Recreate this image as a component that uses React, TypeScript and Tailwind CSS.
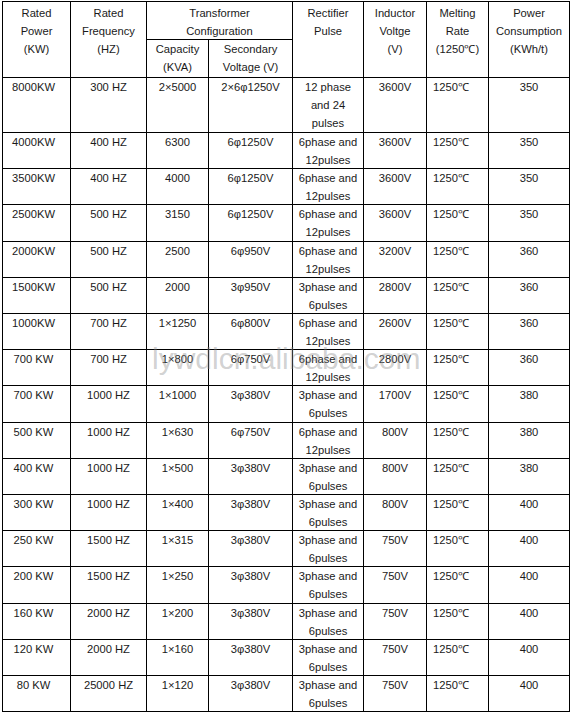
import React from 'react'

type Row = {
  power: string
  freq: string
  capacity: string
  voltage: string
  pulse: string[]
  inductor: string
  melting: string
  consumption: string
  h: string
}

const SIX = ['6phase and', '12pulses']
const THREE = ['3phase and', '6pulses']

const ROWS: Row[] = [
  { power: '8000KW', freq: '300 HZ', capacity: '2×5000', voltage: '2×6φ1250V', pulse: ['12 phase', 'and 24', 'pulses'], inductor: '3600V', melting: '1250℃', consumption: '350', h: 'h-[54px]' },
  { power: '4000KW', freq: '400 HZ', capacity: '6300', voltage: '6φ1250V', pulse: SIX, inductor: '3600V', melting: '1250℃', consumption: '350', h: 'h-[35px]' },
  { power: '3500KW', freq: '400 HZ', capacity: '4000', voltage: '6φ1250V', pulse: SIX, inductor: '3600V', melting: '1250℃', consumption: '350', h: 'h-[35px]' },
  { power: '2500KW', freq: '500 HZ', capacity: '3150', voltage: '6φ1250V', pulse: SIX, inductor: '3600V', melting: '1250℃', consumption: '350', h: 'h-[36px]' },
  { power: '2000KW', freq: '500 HZ', capacity: '2500', voltage: '6φ950V', pulse: SIX, inductor: '3200V', melting: '1250℃', consumption: '360', h: 'h-[35px]' },
  { power: '1500KW', freq: '500 HZ', capacity: '2000', voltage: '3φ950V', pulse: THREE, inductor: '2800V', melting: '1250℃', consumption: '360', h: 'h-[35px]' },
  { power: '1000KW', freq: '700 HZ', capacity: '1×1250', voltage: '6φ800V', pulse: SIX, inductor: '2600V', melting: '1250℃', consumption: '360', h: 'h-[35px]' },
  { power: '700 KW', freq: '700 HZ', capacity: '1×800', voltage: '6φ750V', pulse: SIX, inductor: '2800V', melting: '1250℃', consumption: '360', h: 'h-[35px]' },
  { power: '700 KW', freq: '1000 HZ', capacity: '1×1000', voltage: '3φ380V', pulse: THREE, inductor: '1700V', melting: '1250℃', consumption: '380', h: 'h-[36px]' },
  { power: '500 KW', freq: '1000 HZ', capacity: '1×630', voltage: '6φ750V', pulse: SIX, inductor: '800V', melting: '1250℃', consumption: '380', h: 'h-[35px]' },
  { power: '400 KW', freq: '1000 HZ', capacity: '1×500', voltage: '3φ380V', pulse: THREE, inductor: '800V', melting: '1250℃', consumption: '380', h: 'h-[35px]' },
  { power: '300 KW', freq: '1000 HZ', capacity: '1×400', voltage: '3φ380V', pulse: THREE, inductor: '800V', melting: '1250℃', consumption: '400', h: 'h-[35px]' },
  { power: '250 KW', freq: '1500 HZ', capacity: '1×315', voltage: '3φ380V', pulse: THREE, inductor: '750V', melting: '1250℃', consumption: '400', h: 'h-[35px]' },
  { power: '200 KW', freq: '1500 HZ', capacity: '1×250', voltage: '3φ380V', pulse: THREE, inductor: '750V', melting: '1250℃', consumption: '400', h: 'h-[36px]' },
  { power: '160 KW', freq: '2000 HZ', capacity: '1×200', voltage: '3φ380V', pulse: THREE, inductor: '750V', melting: '1250℃', consumption: '400', h: 'h-[35px]' },
  { power: '120 KW', freq: '2000 HZ', capacity: '1×160', voltage: '3φ380V', pulse: THREE, inductor: '750V', melting: '1250℃', consumption: '400', h: 'h-[35px]' },
  { power: '80 KW', freq: '25000 HZ', capacity: '1×120', voltage: '3φ380V', pulse: THREE, inductor: '750V', melting: '1250℃', consumption: '400', h: 'h-[35px]' },
]

function Lines({ lines }: { lines: string[] }) {
  return (
    <>
      {lines.map((l, i) => (
        <div key={i}>{l}</div>
      ))}
    </>
  )
}

export default function App() {
  const cell = 'bg-white text-center'
  return (
    <div className="w-[573px] h-[715px] bg-white pt-[1px] pl-[2px] font-['Liberation_Sans',Arial,sans-serif] text-[11.2px] leading-[18px] text-[#1a1a1a]">
      <div className="relative w-[568px]">
        <div className="grid grid-cols-[67px_75px_61px_83px_70px_62px_61px_80px] gap-px bg-black p-px">
          {/* header */}
          <div className={`${cell} row-span-2 pt-[2px]`}><Lines lines={['Rated', 'Power', '(KW)']} /></div>
          <div className={`${cell} row-span-2 pt-[2px]`}><Lines lines={['Rated', 'Frequency', '(HZ)']} /></div>
          <div className={`${cell} col-span-2 h-[37px] pt-[2px]`}><Lines lines={['Transformer', 'Configuration']} /></div>
          <div className={`${cell} row-span-2 pt-[2px]`}><Lines lines={['Rectifier', 'Pulse']} /></div>
          <div className={`${cell} row-span-2 pt-[2px]`}><Lines lines={['Inductor', 'Voltge', '(V)']} /></div>
          <div className={`${cell} row-span-2 pt-[2px]`}><Lines lines={['Melting', 'Rate', '(1250℃)']} /></div>
          <div className={`${cell} row-span-2 pt-[2px]`}><Lines lines={['Power', 'Consumption', '(KWh/t)']} /></div>
          <div className={`${cell} h-[37px]`}><Lines lines={['Capacity', '(KVA)']} /></div>
          <div className={`${cell} h-[37px]`}><Lines lines={['Secondary', 'Voltage (V)']} /></div>

          {ROWS.map((r, i) => (
            <React.Fragment key={i}>
              <div className={`${cell} ${r.h} pr-[6px]`}>{r.power}</div>
              <div className={`${cell} ${r.h}`}>{r.freq}</div>
              <div className={`${cell} ${r.h}`}>{r.capacity}</div>
              <div className={`${cell} ${r.h}`}>{r.voltage}</div>
              <div className={`${cell} ${r.h}`}><Lines lines={r.pulse} /></div>
              <div className={`${cell} ${r.h}`}>{r.inductor}</div>
              <div className={`bg-white ${r.h} pl-[6px] text-left`}>{r.melting}</div>
              <div className={`${cell} ${r.h}`}>{r.consumption}</div>
            </React.Fragment>
          ))}
        </div>

        {/* watermark */}
        <div className="pointer-events-none absolute left-[150px] top-[340px] text-[30px] leading-[36px] text-[rgba(140,140,140,0.4)] whitespace-nowrap">
          lywdlcn.alibaba.com
        </div>
      </div>
    </div>
  )
}
